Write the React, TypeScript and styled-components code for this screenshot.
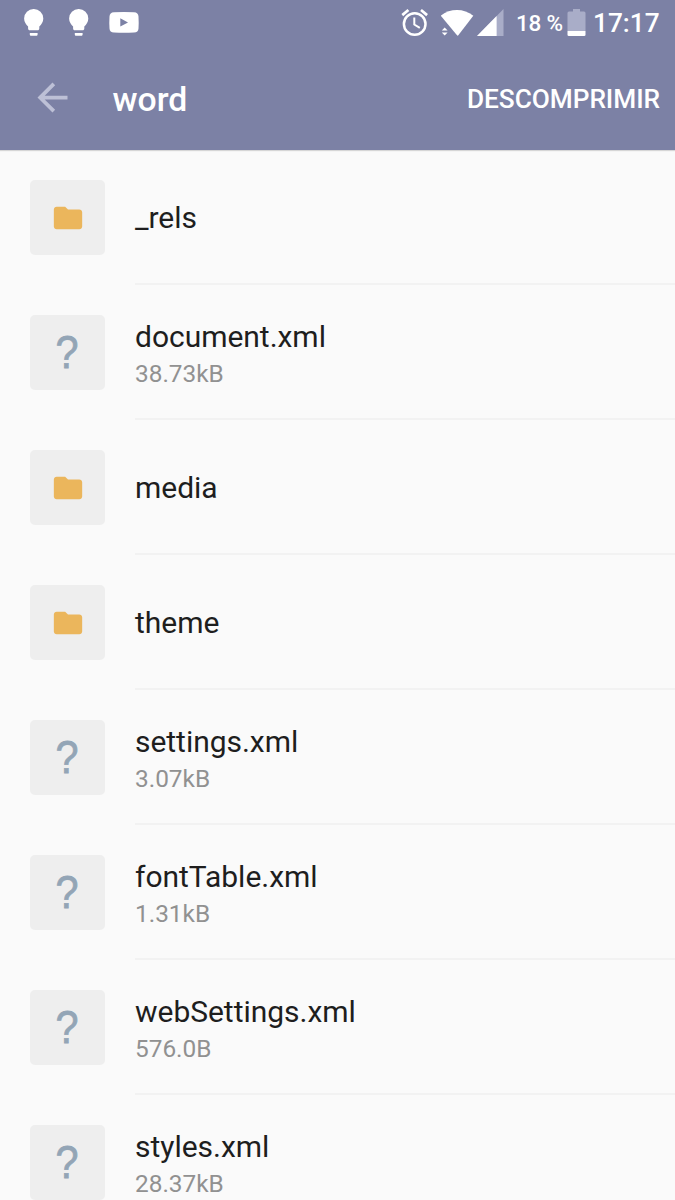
import React from "react";
import styled, { createGlobalStyle } from "styled-components";

const GlobalStyle = createGlobalStyle`
  * { box-sizing: border-box; }
  body {
    margin: 0;
    background: #fafafa;
    font-family: Roboto, "Liberation Sans", sans-serif;
  }
`;

const Screen = styled.div`
  width: 675px;
  height: 1200px;
  overflow: hidden;
  background: #fafafa;
`;

const Header = styled.header`
  position: relative;
  height: 150px;
  background: #7c81a5;
  color: #fff;
  box-shadow: 0 1px 1px rgba(0, 0, 0, 0.14);
`;

const StatusBar = styled.div`
  display: flex;
  justify-content: space-between;
  height: 45px;
  padding: 0 15px 0 23px;
`;

const StatusGroup = styled.div`
  display: flex;
  align-items: center;
`;

const StatusIcon = styled.svg<{ $w: number; $gap?: number }>`
  display: block;
  flex: none;
  width: ${(p) => p.$w}px;
  height: 45px;
  margin-right: ${(p) => p.$gap ?? 0}px;
  fill: #fff;
`;

const BatteryLevel = styled.span`
  width: 46px;
  margin-right: 5px;
  padding-top: 1px;
  font-size: 22.5px;
  line-height: 26px;
  letter-spacing: -0.2px;
  font-weight: 500;
  white-space: nowrap;
`;

const Clock = styled.span`
  width: 67px;
  padding-top: 1px;
  font-size: 26.25px;
  line-height: 30px;
  font-weight: 500;
  white-space: nowrap;
`;

const Toolbar = styled.div`
  display: flex;
  align-items: center;
  height: 105px;
  padding: 0 15px 0 30px;
`;

const BackArrow = styled.svg`
  width: 45px;
  height: 45px;
  margin-right: 37.5px;
  fill: #bdc0d6;
`;

const Title = styled.h1`
  flex: 1;
  margin: 0;
  padding-top: 4px;
  font-size: 33.75px;
  line-height: 40px;
  font-weight: 500;
`;

const Action = styled.button`
  padding: 2px 0 0;
  border: 0;
  background: none;
  color: #fff;
  font: 500 26.25px/30px Roboto, "Liberation Sans", sans-serif;
  letter-spacing: -0.05px;
`;

const List = styled.ul`
  margin: 0;
  padding: 0;
  list-style: none;
`;

const Row = styled.li`
  display: flex;
  height: 135px;
  padding-left: 30px;
`;

const Tile = styled.div`
  display: flex;
  align-items: center;
  justify-content: center;
  flex: none;
  width: 75px;
  height: 75px;
  margin: 30px 30px 0 0;
  border-radius: 5px;
  background: #eee;
`;

const UnknownMark = styled.span`
  color: #93a5b6;
  font-family: "Liberation Sans", sans-serif;
  font-size: 47px;
  line-height: 73px;
  padding-bottom: 2px;
  -webkit-text-stroke: 0.8px #93a5b6;
  transform: scaleX(0.88);
`;

const FolderIcon = styled.svg`
  width: 34px;
  height: 34px;
  fill: #ebb65c;
`;

const Details = styled.div<{ $single: boolean }>`
  display: flex;
  flex: 1;
  flex-direction: column;
  justify-content: center;
  height: 135px;
  padding-top: ${(p) => (p.$single ? 2 : 6)}px;
  border-bottom: 2px solid #f2f2f2;
`;

const Name = styled.div`
  color: #1e1e1e;
  font-size: 30px;
  line-height: 39px;
  letter-spacing: -0.03px;
`;

const Size = styled.div`
  color: #919191;
  font-size: 24.4px;
  line-height: 36px;
`;

const entries: { name: string; size?: string }[] = [
  { name: "_rels" },
  { name: "document.xml", size: "38.73kB" },
  { name: "media" },
  { name: "theme" },
  { name: "settings.xml", size: "3.07kB" },
  { name: "fontTable.xml", size: "1.31kB" },
  { name: "webSettings.xml", size: "576.0B" },
  { name: "styles.xml", size: "28.37kB" },
];

function Bulb({ gap }: { gap: number }) {
  return (
    <StatusIcon $w={21} $gap={gap} viewBox="0 0 21 45">
      <path d="M10.7 9a9.5 9.5 0 0 0-9.6 9.5c0 3.5 2 6 4 8v2c0 1 .7 1.8 1.7 1.8h7.8c1 0 1.7-.8 1.7-1.8v-2c2-2 4-4.500 4-8A9.500 9.500 0 0 0 10.700 9zM6.800 33h7.800v1.400c0 .8-.6 1.400-1.400 1.400h-5c-.8 0-1.400-.6-1.400-1.400z" />
    </StatusIcon>
  );
}

export default function App() {
  return (
    <Screen>
      <GlobalStyle />
      <Header>
        <StatusBar>
          <StatusGroup>
            <Bulb gap={24} />
            <Bulb gap={20} />
            <StatusIcon $w={30} viewBox="0 0 30 45">
              <path
                fillRule="evenodd"
                d="M5 12.300Q15 11.700 25 12.300Q29.300 12.500 29.500 16.500Q29.900 22.500 29.500 28.500Q29.300 32.300 25 32.500Q15 33 5 32.500Q.7 32.300.5 28.500Q.1 22.500.5 16.500Q.7 12.500 5 12.300zM11.300 18.300v8.200l7.700-4.100z"
              />
            </StatusIcon>
          </StatusGroup>
          <StatusGroup>
            <StatusIcon $w={28} $gap={12} viewBox="0 0 28 45">
              <g fill="none" stroke="#fff">
                <circle cx="13.700" cy="24" r="10.800" strokeWidth="2.500" />
                <path d="M13.300 17.500v7l5.500 3.300" strokeWidth="2" />
                <path d="M1.300 15.100l6.100-5.100M20 10l6.100 5.100" strokeWidth="2.700" />
              </g>
            </StatusIcon>
            <StatusIcon $w={33} $gap={3} viewBox="0 0 33 45">
              <path d="M-.3 15.700Q7 10 16 10T32.300 15.700L17.300 35.300Q16.700 36 16 35.300z" />
              <path d="M.8 30.500l2.900-3 2.900 3zM.8 32.500h5.800l-2.900 3z" />
            </StatusIcon>
            <StatusIcon $w={27} $gap={12} viewBox="0 0 27 45">
              <path d="M26.500 9v27H0z" fill="#a9adc8" />
              <path d="M19.600 16v20H0z" />
            </StatusIcon>
            <BatteryLevel>18 %</BatteryLevel>
            <StatusIcon $w={19} $gap={7} viewBox="0 0 19 45">
              <path
                d="M6 9h7v2.500h4q1.500 0 1.500 1.500v18H.5V13q0-1.500 1.500-1.500h4z"
                fill="#a9adc8"
              />
              <path d="M.5 31h18v3.700q0 1.300-1.300 1.300H1.800Q.5 36 .5 34.700z" />
            </StatusIcon>
            <Clock>17:17</Clock>
          </StatusGroup>
        </StatusBar>
        <Toolbar>
          <BackArrow viewBox="0 0 24 24">
            <path d="M20 11H7.830l5.590-5.590L12 4l-8 8 8 8 1.410-1.410L7.830 13H20v-2z" />
          </BackArrow>
          <Title>word</Title>
          <Action>DESCOMPRIMIR</Action>
        </Toolbar>
      </Header>
      <List>
        {entries.map((entry) => (
          <Row key={entry.name}>
            <Tile>
              {entry.size ? (
                <UnknownMark>?</UnknownMark>
              ) : (
                <FolderIcon viewBox="0 0 24 24">
                  <path d="M10 4H4c-1.100 0-1.990.9-1.990 2L2 18c0 1.100.9 2 2 2h16c1.100 0 2-.9 2-2V8c0-1.100-.9-2-2-2h-8l-2-2z" />
                </FolderIcon>
              )}
            </Tile>
            <Details $single={!entry.size}>
              <Name>{entry.name}</Name>
              {entry.size && <Size>{entry.size}</Size>}
            </Details>
          </Row>
        ))}
      </List>
    </Screen>
  );
}
